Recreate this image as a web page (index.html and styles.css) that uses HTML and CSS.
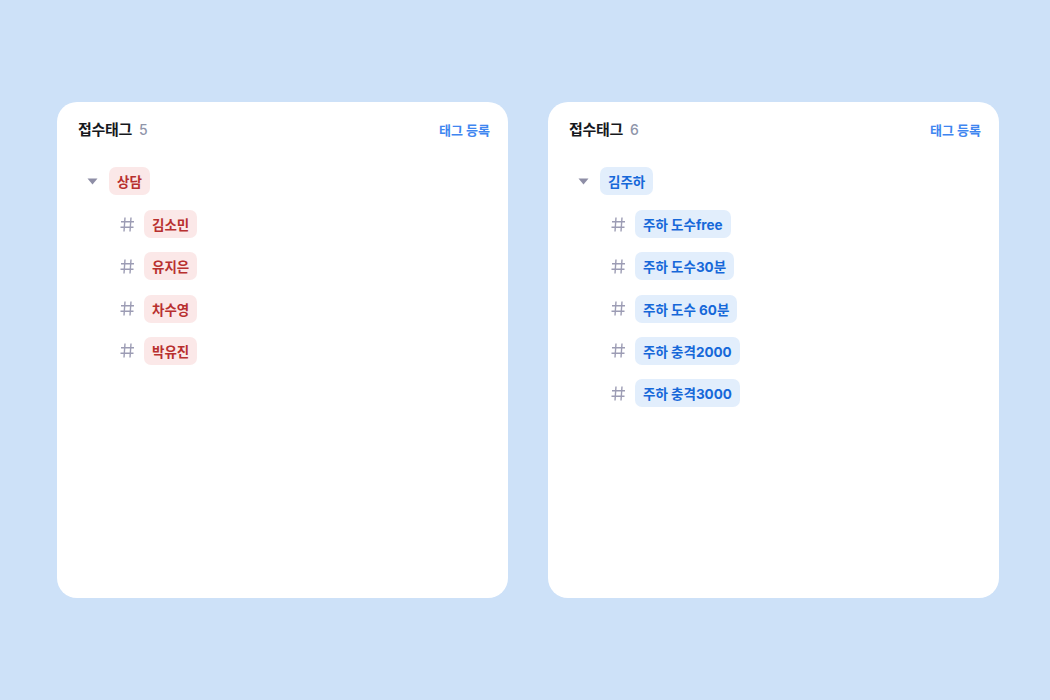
FILE: index.html
```html
<!DOCTYPE html>
<html lang="ko">
<head>
<meta charset="utf-8">
<link rel="stylesheet" href="styles.css">
</head>
<body>
<div class="board">
  <section class="card">
    <header class="card-head">
      <h2 class="title">접수태그<span class="count">5</span></h2>
      <a class="register">태그 등록</a>
    </header>
    <div class="tree">
      <div class="row root">
        <svg class="caret" width="11" height="7" viewBox="0 0 11 7"><path d="M0.5 0.5h10L5.5 6.5z" fill="#8e8ea6"/></svg>
        <span class="chip red">상담</span>
      </div>
      <div class="row child"><svg class="hash" width="15" height="17" viewBox="0 0 15 17"><path d="M5 1.5L4 15.5M11 1.5L10 15.5M1 5.8H14M0.5 11.2H13.5" stroke="#9c9cb4" stroke-width="1.4" fill="none"/></svg><span class="chip red">김소민</span></div>
      <div class="row child"><svg class="hash" width="15" height="17" viewBox="0 0 15 17"><path d="M5 1.5L4 15.5M11 1.5L10 15.5M1 5.8H14M0.5 11.2H13.5" stroke="#9c9cb4" stroke-width="1.4" fill="none"/></svg><span class="chip red">유지은</span></div>
      <div class="row child"><svg class="hash" width="15" height="17" viewBox="0 0 15 17"><path d="M5 1.5L4 15.5M11 1.5L10 15.5M1 5.8H14M0.5 11.2H13.5" stroke="#9c9cb4" stroke-width="1.4" fill="none"/></svg><span class="chip red">차수영</span></div>
      <div class="row child"><svg class="hash" width="15" height="17" viewBox="0 0 15 17"><path d="M5 1.5L4 15.5M11 1.5L10 15.5M1 5.8H14M0.5 11.2H13.5" stroke="#9c9cb4" stroke-width="1.4" fill="none"/></svg><span class="chip red">박유진</span></div>
    </div>
  </section>
  <section class="card">
    <header class="card-head">
      <h2 class="title">접수태그<span class="count">6</span></h2>
      <a class="register">태그 등록</a>
    </header>
    <div class="tree">
      <div class="row root">
        <svg class="caret" width="11" height="7" viewBox="0 0 11 7"><path d="M0.5 0.5h10L5.5 6.5z" fill="#8e8ea6"/></svg>
        <span class="chip blue">김주하</span>
      </div>
      <div class="row child"><svg class="hash" width="15" height="17" viewBox="0 0 15 17"><path d="M5 1.5L4 15.5M11 1.5L10 15.5M1 5.8H14M0.5 11.2H13.5" stroke="#9c9cb4" stroke-width="1.4" fill="none"/></svg><span class="chip blue">주하 도수free</span></div>
      <div class="row child"><svg class="hash" width="15" height="17" viewBox="0 0 15 17"><path d="M5 1.5L4 15.5M11 1.5L10 15.5M1 5.8H14M0.5 11.2H13.5" stroke="#9c9cb4" stroke-width="1.4" fill="none"/></svg><span class="chip blue">주하 도수30분</span></div>
      <div class="row child"><svg class="hash" width="15" height="17" viewBox="0 0 15 17"><path d="M5 1.5L4 15.5M11 1.5L10 15.5M1 5.8H14M0.5 11.2H13.5" stroke="#9c9cb4" stroke-width="1.4" fill="none"/></svg><span class="chip blue">주하 도수 60분</span></div>
      <div class="row child"><svg class="hash" width="15" height="17" viewBox="0 0 15 17"><path d="M5 1.5L4 15.5M11 1.5L10 15.5M1 5.8H14M0.5 11.2H13.5" stroke="#9c9cb4" stroke-width="1.4" fill="none"/></svg><span class="chip blue">주하 충격2000</span></div>
      <div class="row child"><svg class="hash" width="15" height="17" viewBox="0 0 15 17"><path d="M5 1.5L4 15.5M11 1.5L10 15.5M1 5.8H14M0.5 11.2H13.5" stroke="#9c9cb4" stroke-width="1.4" fill="none"/></svg><span class="chip blue">주하 충격3000</span></div>
    </div>
  </section>
</div>
</body>
</html>
```

FILE: styles.css
```css
* { box-sizing: border-box; }
html, body { margin: 0; padding: 0; }
body {
  background: #cde1f8;
  width: 1050px;
  height: 700px;
  font-family: "Inter", "Noto Sans CJK KR", sans-serif;
  overflow: hidden;
}
.board {
  display: flex;
  gap: 40px;
  padding: 102px 0 0 57px;
}
.card {
  width: 451px;
  height: 496px;
  background: #ffffff;
  border-radius: 20px;
  padding: 16px 18px 0 21px;
}
.card-head {
  display: flex;
  justify-content: space-between;
  align-items: center;
  height: 24px;
  margin-bottom: 2px;
}
.title {
  margin: 0;
  font-size: 15px;
  font-weight: 700;
  color: #16181d;
  letter-spacing: -0.3px;
  line-height: 24px;
}
.count {
  font-weight: 500;
  color: #8f95aa;
  font-size: 14px;
  margin-left: 7px;
  letter-spacing: 0;
}
.register {
  font-size: 13px;
  font-weight: 700;
  color: #3f86f0;
  letter-spacing: 0;
  line-height: 24px;
}
.tree {
  display: flex;
  flex-direction: column;
  gap: 14.25px;
  padding-top: 23px;
}
.row {
  display: flex;
  align-items: center;
  height: 28px;
}
.root {
  padding-left: 9px;
  gap: 11px;
}
.root + .child { margin-top: 0.75px; }
.child {
  padding-left: 42px;
  gap: 9px;
}
.caret { display: block; }
.hash { display: block; }
.chip {
  display: inline-flex;
  align-items: center;
  height: 28px;
  padding: 0 8px;
  border-radius: 7px;
  font-size: 13.5px;
  font-weight: 700;
  letter-spacing: 0;
}
.chip.red { background: #fbe8e8; color: #b8302f; }
.chip.blue { background: #e2eefc; color: #1668d9; }
```
